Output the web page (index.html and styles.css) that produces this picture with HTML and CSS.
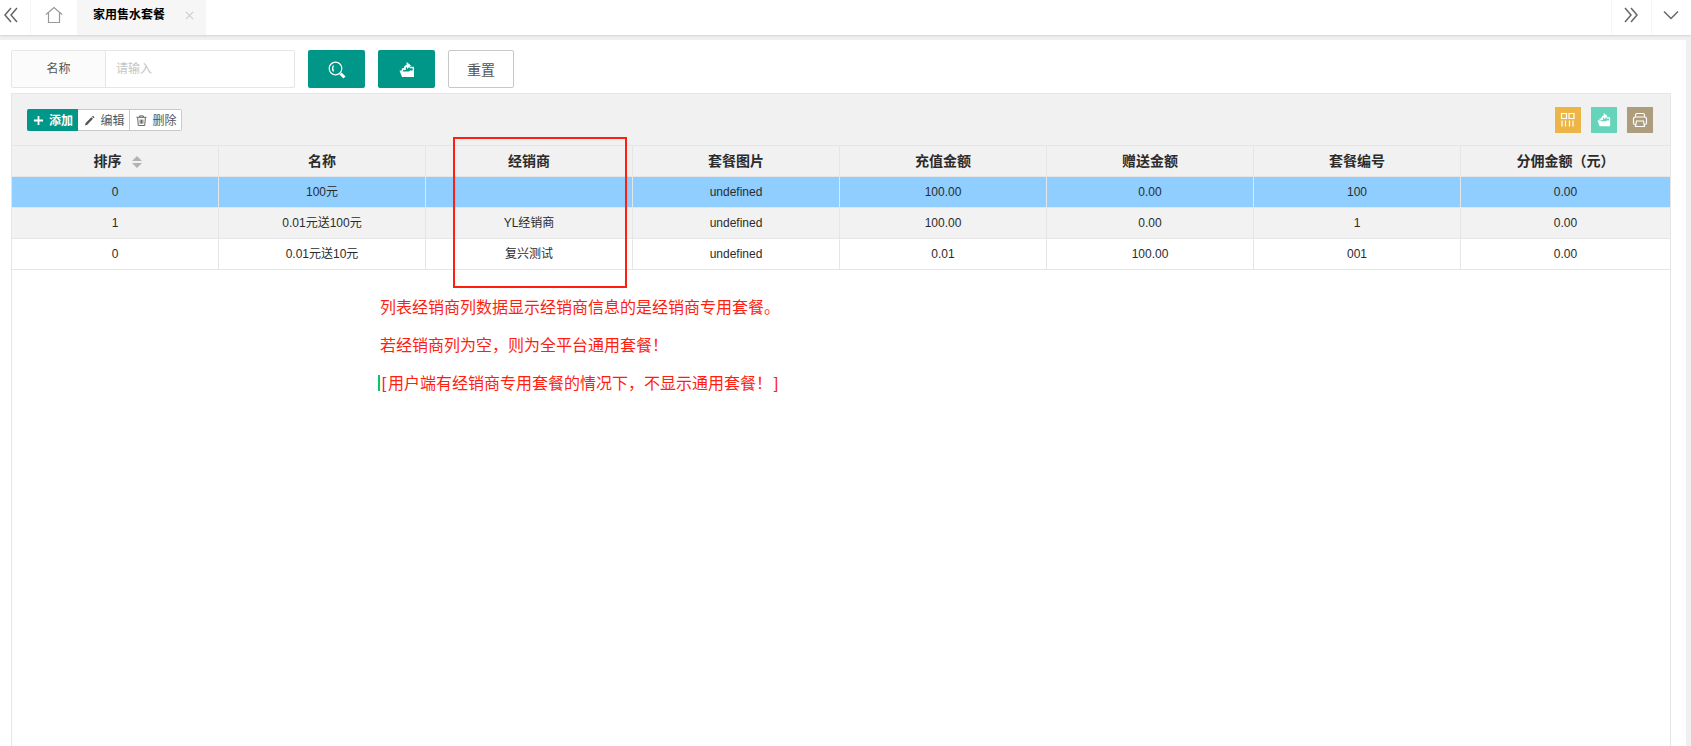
FILE: index.html
```
<!DOCTYPE html>
<html lang="zh-CN">
<head>
<meta charset="utf-8">
<title>家用售水套餐</title>
<link rel="stylesheet" href="styles.css">
</head>
<body>
<svg class="sprite" aria-hidden="true">
  <symbol id="export" viewBox="0 0 16 16">
    <path d="M0.500 8.500H3l1 1h6l1-1h4V15H3z" fill="currentColor"/>
    <path d="M3.500 9V7H6M10.500 5.500h3.800v5" fill="none" stroke="currentColor" stroke-width="1.300"/>
    <path d="M6 8Q5 4.200 8.500 3.800" fill="none" stroke="currentColor" stroke-width="2"/>
    <path d="M7.500 0L12 3.500 8 7z" fill="currentColor"/>
  </symbol>
</svg>
<nav class="tabbar">
  <button class="nav-btn nav-prev" type="button" aria-label="向左"><svg class="icon" viewBox="0 0 16 16"><path d="M8 1L2 8l6 7M14 1L8 8l6 7"/></svg></button>
  <button class="nav-btn nav-home" type="button" aria-label="主页"><svg class="icon home" viewBox="0 0 18 18"><path d="M1 8.500L9 1.500l8 7M3.500 7v9.500h11V7"/></svg></button>
  <div class="tab"><span>家用售水套餐</span><button class="close" type="button" aria-label="关闭"><svg viewBox="0 0 10 10"><path d="M1 1l8 8M9 1L1 9"/></svg></button></div>
  <span class="spacer"></span>
  <button class="nav-btn nav-next" type="button" aria-label="向右"><svg class="icon" viewBox="0 0 16 16"><path d="M2 1l6 7-6 7M8 1l6 7-6 7"/></svg></button>
  <button class="nav-btn nav-more" type="button" aria-label="更多"><svg class="icon" viewBox="0 0 16 16"><path d="M1 4.500l7 7 7-7"/></svg></button>
</nav>
<main class="page">
  <form class="search">
    <div class="field">
      <label for="name">名称</label>
      <input id="name" type="text" placeholder="请输入">
    </div>
    <button class="btn primary" type="button" aria-label="搜索"><svg class="btn-icon" viewBox="0 0 18 18"><circle cx="7.500" cy="7.500" r="6.300"/><path d="M5.500 4.500Q3.500 7.500 5.500 10.500"/><path class="handle" d="M12.500 12.500l4 4"/></svg></button>
    <button class="btn primary" type="button" aria-label="导出"><svg class="btn-icon export"><use href="#export"/></svg></button>
    <button class="btn reset" type="reset">重置</button>
  </form>
  <section class="panel">
    <div class="toolbar">
      <div class="actions">
        <button class="act add" type="button"><svg viewBox="0 0 12 12"><path d="M6 1v10M1 6h10"/></svg>添加</button>
        <button class="act" type="button"><svg viewBox="0 0 12 12"><path class="pen" d="M1 11.500l.8-2.800L8 2.500l1.800 1.700L3.600 10.500zM8.700 1.800L9.800.8l1.700 1.700-1.100 1.100z"/></svg>编辑</button>
        <button class="act" type="button"><svg viewBox="0 0 12 12"><path d="M.5 2.500h11M4 2.500v-1.500h4v1.500M1.800 3l.7 8.500h7L10.200 3M4.500 5v4.500M6 5v4.500M7.500 5v4.500"/></svg>删除</button>
      </div>
      <div class="tools">
        <button class="tool filter" type="button" aria-label="筛选列"><svg viewBox="0 0 16 16"><path d="M1.500 1.500h5v5h-5zM9 1.500h5v5H9zM2 8.500v6M5.500 8.500v6M9.500 8.500v6M13 8.500v6"/></svg></button>
        <button class="tool out" type="button" aria-label="导出"><svg viewBox="0 0 16 16"><use href="#export"/></svg></button>
        <button class="tool print" type="button" aria-label="打印"><svg viewBox="0 0 16 16"><path d="M3.500 5V3Q3.500 1.500 5 1.500h6q1.500 0 1.500 1.500v2M3.500 12.500H3Q1.500 12.500 1.500 11V7Q1.500 5 3.500 5h9q2 0 2 2v4q0 1.500-1.500 1.500h-.5M4.500 9h7l1 5.500h-9z"/></svg></button>
      </div>
    </div>
    <div class="grid">
      <table>
        <colgroup><col><col><col><col><col><col><col><col class="last"></colgroup>
        <thead>
          <tr><th class="sortable">排序<svg class="sort" viewBox="0 0 10 12"><path d="M0 5l5-5 5 5zM0 7h10l-5 5z"/></svg></th><th>名称</th><th>经销商</th><th>套餐图片</th><th>充值金额</th><th>赠送金额</th><th>套餐编号</th><th>分佣金额（元）</th></tr>
        </thead>
        <tbody>
          <tr class="selected"><td>0</td><td>100元</td><td></td><td>undefined</td><td>100.00</td><td>0.00</td><td>100</td><td>0.00</td></tr>
          <tr class="even"><td>1</td><td>0.01元送100元</td><td>YL经销商</td><td>undefined</td><td>100.00</td><td>0.00</td><td>1</td><td>0.00</td></tr>
          <tr><td>0</td><td>0.01元送10元</td><td>复兴测试</td><td>undefined</td><td>0.01</td><td>100.00</td><td>001</td><td>0.00</td></tr>
        </tbody>
      </table>
      <div class="highlight"></div>
    </div>
    <div class="notes">
      <p>列表经销商列数据显示经销商信息的是经销商专用套餐。</p>
      <p>若经销商列为空，则为全平台通用套餐！</p>
      <p class="caret"><span class="bracket">[</span>用户端有经销商专用套餐的情况下，不显示通用套餐！<span class="bracket">]</span></p>
    </div>
  </section>
</main>
</body>
</html>
```
FILE: styles.css
```
* { box-sizing: border-box; }
body {
  margin: 0;
  height: 100vh;
  overflow: hidden;
  display: flex;
  flex-direction: column;
  background: #f0f0f0;
  color: #2b2b2b;
  font: 12px/20px "Liberation Sans", "Noto Sans CJK SC", sans-serif;
}
button, input { font: inherit; color: inherit; margin: 0; padding: 0; border: 0; background: none; }
svg { display: block; flex: none; fill: none; stroke: currentColor; }
.sprite { position: absolute; width: 0; height: 0; }

.tabbar { display: flex; height: 35px; background: #fff; box-shadow: 0 1px 2px rgba(0, 0, 0, .12); flex: none; }
.nav-btn { display: flex; align-items: center; justify-content: center; padding-bottom: 5px; width: 40px; color: #666; }
.nav-prev { width: 31px; padding-right: 9px; border-right: 1px solid #f6f6f6; }
.nav-home { width: 46px; color: #999; }
.nav-next, .nav-more { padding-right: 2px; border-left: 1px solid #f6f6f6; }
.icon { width: 16px; height: 16px; stroke-width: 1.5; }
.home { width: 18px; height: 18px; stroke-width: 1.2; }
.tab { display: flex; align-items: center; gap: 20px; padding: 0 12px 5px 16px; background: #f6f6f6; color: #000; font-weight: 700; }
.close { color: #ccc; }
.close svg { width: 9px; height: 9px; stroke-width: 1.2; }
.spacer { flex: 1; }

.page { display: flex; flex-direction: column; flex: 1; margin: 5px 5px 0 0; padding: 10px 15px 0 11px; background: #fff; border-radius: 0 2px 0 0; }
.search { display: flex; gap: 13px; margin-bottom: 5px; }
.field { display: flex; width: 284px; height: 38px; border: 1px solid #e6e6e6; border-radius: 2px; }
.field label { width: 94px; line-height: 36px; text-align: center; color: #555; background: #fbfbfb; border-right: 1px solid #e6e6e6; }
.field input { flex: 1; min-width: 0; padding: 0 10px; }
.field input::placeholder { color: #c4c4c4; opacity: 1; }
.btn { display: flex; align-items: center; justify-content: center; height: 38px; border-radius: 2px; }
.primary { width: 57px; background: #009688; color: #fff; }
.btn-icon { width: 18px; height: 18px; margin-top: 2px; stroke-width: 1.2; }
.btn-icon .handle { stroke-width: 3; }
.export { width: 16px; height: 16px; stroke: none; }
.reset { width: 66px; padding-top: 2px; border: 1px solid #c9c9c9; color: #555; font-size: 14px; }

.panel { flex: 1; border: 1px solid #e6e6e6; border-bottom: 0; }
.toolbar { display: flex; justify-content: space-between; align-items: center; height: 52px; padding: 0 17px 0 15px; background: #f1f1f1; border-bottom: 1px solid #e6e6e6; }
.actions { display: flex; }
.act { display: flex; align-items: center; justify-content: center; gap: 5px; width: 52px; height: 22px; padding: 2px 0 0 2px; color: #555; background: #fff; border: 1px solid #c9c9c9; border-left-width: 0; }
.act svg { width: 11px; height: 11px; stroke-width: 1; }
.act .pen { fill: currentColor; stroke: none; }
.act:last-child { border-radius: 0 2px 2px 0; }
.act.add { width: 51px; background: #009688; border-color: #009688; color: #fff; font-weight: 700; border-radius: 2px 0 0 2px; }
.add svg { stroke-width: 2; }
.tools { display: flex; gap: 10px; }
.tool { display: flex; align-items: center; justify-content: center; width: 26px; height: 26px; color: #fff; }
.tool svg { width: 16px; height: 16px; stroke-width: 1.2; }
.filter { background: #ecb546; }
.out { background: #66d3bb; }
.tool.out svg { width: 14px; height: 14px; stroke: none; }
.print { background: #ae9d7c; }

.grid { position: relative; }
table { width: 100%; table-layout: fixed; border-collapse: separate; border-spacing: 0; }
.last { width: 209px; }
th, td { height: 31px; padding: 0; text-align: center; border: solid #e6e6e6; border-width: 0 1px 1px 0; }
th:last-child, td:last-child { border-right: 0; }
th { font-size: 14px; background: #f1f1f1; }
th.sortable { padding-left: 5px; }
.sort { display: inline-block; width: 10px; height: 12px; margin-left: 10px; fill: #b2b2b2; stroke: none; vertical-align: -2px; }
.selected { background: #8fceff; }
.even { background: #f2f2f2; }
.highlight { position: absolute; top: -9px; left: 441px; width: 174px; height: 151px; border: 2px solid #ff1e10; }

.notes { padding: 19px 0 0 368px; color: #ff1e10; font-size: 16px; line-height: 38px; }
.notes p { margin: 0; }
.bracket { display: inline-block; width: 8px; text-align: center; }
.caret::before { content: ""; display: inline-block; width: 2px; height: 16px; margin-left: -2px; background: #0fc36b; vertical-align: -2px; }
```
